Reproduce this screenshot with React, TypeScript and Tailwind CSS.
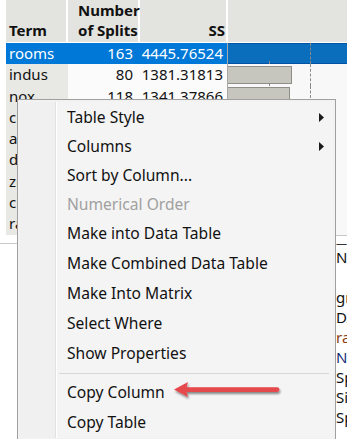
import React from 'react';

interface Row {
  term: string;
  splits: number;
  ss: string;
  bar: number;
}

const rows: Row[] = [
  { term: 'rooms', splits: 163, ss: '4445.76524', bar: 118 },
  { term: 'indus', splits: 80, ss: '1381.31813', bar: 64 },
  { term: 'nox', splits: 118, ss: '1341.37866', bar: 62 },
  { term: 'crim', splits: 97, ss: '1120.42291', bar: 52 },
  { term: 'age', splits: 74, ss: '854.90210', bar: 40 },
  { term: 'dis', splits: 66, ss: '611.03482', bar: 29 },
  { term: 'zn', splits: 21, ss: '212.77104', bar: 10 },
  { term: 'chas', splits: 12, ss: '98.11863', bar: 5 },
  { term: 'rad', splits: 18, ss: '71.50228', bar: 4 },
];

const menuItems: { label: string; sub?: boolean; disabled?: boolean; h: string }[] = [
  { label: 'Table Style', sub: true, h: 'h-[29px]' },
  { label: 'Columns', sub: true, h: 'h-[29px]' },
  { label: 'Sort by Column...', h: 'h-[29px]' },
  { label: 'Numerical Order', disabled: true, h: 'h-[29px]' },
  { label: 'Make into Data Table', h: 'h-[30px]' },
  { label: 'Make Combined Data Table', h: 'h-[30px]' },
  { label: 'Make Into Matrix', h: 'h-[30px]' },
  { label: 'Select Where', h: 'h-[30px]' },
  { label: 'Show Properties', h: 'h-[30px]' },
];

const sideLines: { text: string; color: string }[] = [
  { text: 'Ne', color: 'text-[#111]' },
  { text: '', color: 'text-[#111]' },
  { text: 'gr', color: 'text-[#111]' },
  { text: 'DA', color: 'text-[#111]' },
  { text: 'ra', color: 'text-[#8a3d12]' },
  { text: 'Nu', color: 'text-[#17307a]' },
  { text: 'Sp', color: 'text-[#111]' },
  { text: 'Siz', color: 'text-[#111]' },
  { text: 'Sp', color: 'text-[#111]' },
];

export default function App() {
  return (
    <div
      className="relative w-[347px] h-[439px] overflow-hidden bg-white text-[15px] text-[#111]"
      style={{ fontFamily: '"Noto Sans", "Open Sans", sans-serif' }}
    >
      {/* Table header */}
      <div className="flex h-[43px] bg-white">
        <div className="w-[6px] bg-white" />
        <div className="w-[62px] bg-[#e3e3df] border-r-2 border-white border-b border-b-white flex items-end pl-[3px] pb-[2px] font-bold leading-[20px]">
          Term
        </div>
        <div className="w-[72px] bg-[#e3e3df] border-r-2 border-white border-b border-b-white flex flex-col justify-end items-start pl-[10px] pb-[2px] font-bold leading-[20px]">
          <span>Number</span>
          <span>of Splits</span>
        </div>
        <div className="w-[88px] bg-[#e3e3df] border-r-2 border-white border-b border-b-white flex items-end justify-end pr-[1px] pb-[2px] font-bold leading-[20px]">
          SS
        </div>
        <div className="flex-1 bg-[#e3e3df] border-b border-b-white" />
      </div>

      {/* Table rows */}
      {rows.map((r, i) => {
        const sel = i === 0;
        return (
          <div key={r.term} className="flex h-[21.3px] leading-[21px]">
            <div className="w-[6px] bg-white" />
            <div className={`w-[62px] pl-[3px] ${sel ? 'bg-[#0078d7] text-white' : 'bg-[#e8e8e4]'}`}>{r.term}</div>
            <div className={`w-[72px] text-right pr-[7px] ${sel ? 'bg-[#0078d7] text-white' : 'bg-[#fbfbfb]'}`}>{r.splits}</div>
            <div className={`w-[88px] text-right pr-[4px] border-r border-r-[#a8a8a4] ${sel ? 'bg-[#0078d7] text-white' : 'bg-[#fbfbfb]'}`}>{r.ss}</div>
            <div className="relative flex-1 bg-[#f8f8f8] flex items-center">
              {sel ? (
                <div className="h-full w-full bg-[#0a6ebd] border-y border-[#0052a3]" />
              ) : (
                <div className="h-[18px] bg-[#c6c6bf] border border-[#8f8f88] border-l-0" style={{ width: r.bar }} />
              )}
              <div className="absolute left-[41px] bottom-0 h-[3px] border-l border-[#8a8a8a]" />
              <div className="absolute left-[82px] top-0 h-full border-l border-dashed border-[#8a8a8a]" />
            </div>
          </div>
        );
      })}

      {/* Lower area */}
      <div className="flex">
        <div className="w-[336px] pt-[8px]">
          <div className="border-t border-[#c8c8c8]" />
        </div>
        <div className="flex-1 border-t border-[#c8c8c8] leading-[20px] whitespace-nowrap overflow-hidden">
          <div className="h-[11px] pt-[3px] text-[11px] leading-[8px] text-[#333]">——</div>
          {sideLines.map((l, i) => (
            <div key={i} className={`h-[20px] ${l.color}`}>{l.text}</div>
          ))}
        </div>
      </div>

      {/* Context menu */}
      <div className="absolute left-[17px] top-[99px] w-[319px] h-[342px] bg-[#f2f2f2] border border-[#a0a0a0] p-[2px] flex text-[15.6px]">
        <div className="w-[36px] bg-[#f0f0f0] border-r border-[#e2e2e2]" />
        <div className="flex-1 border-l border-white bg-[#f4f4f4] flex flex-col">
          <div className="h-[1px]" />
          {menuItems.map((m) => (
            <div key={m.label} className={`${m.h} flex items-center pl-[10px] pr-[9px] ${m.disabled ? 'text-[#a0a0a0]' : ''}`}>
              <span className="flex-1">{m.label}</span>
              {m.sub && (
                <svg width="5" height="9" viewBox="0 0 5 9">
                  <path d="M0 0 L5 4.5 L0 9 Z" fill="#1a1a1a" />
                </svg>
              )}
            </div>
          ))}
          <div className="h-[9px] flex items-center pl-[2px] pr-[4px]">
            <div className="w-full border-t border-[#d8d8d8]" />
          </div>
          <div className="h-[30px] flex items-center pl-[10px]">Copy Column</div>
          <div className="h-[30px] flex items-center pl-[10px]">Copy Table</div>
        </div>
      </div>

      {/* Annotation arrow */}
      <svg className="absolute left-[168px] top-[378px]" width="120" height="26" viewBox="0 0 120 26">
        <defs>
          <filter id="sh" x="-10%" y="-50%" width="130%" height="200%">
            <feGaussianBlur in="SourceAlpha" stdDeviation="1.2" />
            <feOffset dx="1" dy="2" result="b" />
            <feComponentTransfer><feFuncA type="linear" slope="0.45" /></feComponentTransfer>
            <feMerge><feMergeNode /><feMergeNode in="SourceGraphic" /></feMerge>
          </filter>
        </defs>
        <g filter="url(#sh)">
          <path d="M18 9.2 L109 9.2 A2.4 2.4 0 0 1 109 14 L18 14 Z" fill="#e5484b" />
          <path d="M6 11.5 L20 4 Q17 11.5 20 19 Z" fill="#e5484b" />
        </g>
      </svg>
    </div>
  );
}
